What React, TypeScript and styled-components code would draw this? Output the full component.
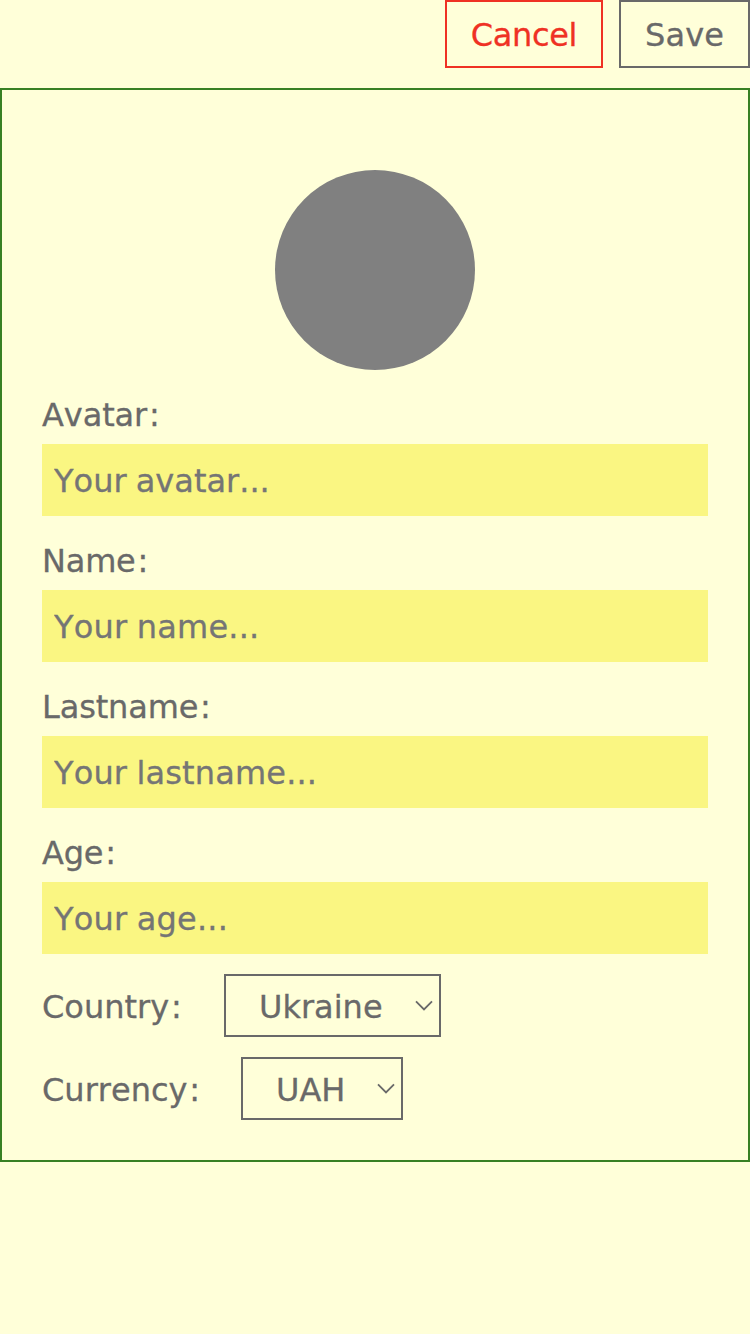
import React from 'react';
import styled, { createGlobalStyle } from 'styled-components';

const Global = createGlobalStyle`
  * { box-sizing: border-box; }
  body {
    margin: 0; background: #ffffd9; color: #696969;
    font: 32px/40px Verdana, "DejaVu Sans", sans-serif; font-kerning: none;
    -webkit-text-stroke: 0.3px currentColor;
  }
`;
const Page = styled.main`min-height: 1334px; background: #ffffd9;`;
const Toolbar = styled.div`display: flex; justify-content: flex-end; gap: 16px; margin-bottom: 20px;`;
const Button = styled.button<{ $width: number; $color: string; $tracking: number }>`
  width: ${p => p.$width}px; height: 68px; padding: 1px 0 0; background: transparent;
  border: 2px solid ${p => p.$color}; color: ${p => p.$color}; font: inherit; font-kerning: none;
  letter-spacing: ${p => p.$tracking}px; white-space: nowrap;
`;
const Form = styled.form`height: 1074px; border: 2px solid #388024; padding: 80px 40px 40px; display: flex; flex-direction: column;`;
const Avatar = styled.div`width: 200px; height: 200px; border-radius: 50%; background: #808080; align-self: center; margin-bottom: 20px; flex: none;`;
const Field = styled.label`display: flex; flex-direction: column; height: 126px; margin-bottom: 20px; flex: none;`;
const Label = styled.span<{ $tracking: number }>`display: block; height: 54px; padding-top: 5px; letter-spacing: ${p => p.$tracking}px; white-space: nowrap;`;
const Colon = styled.span`margin-left: 1.9px;`;
const Input = styled.input<{ $tracking: number }>`
  height: 72px; width: 100%; padding: 3px 12px 1px; border: 0; border-radius: 0; outline: 0;
  background: #faf682; color: #757575; font: inherit; font-kerning: none;
  letter-spacing: ${p => p.$tracking}px; word-spacing: -1px;
  &::placeholder { color: #757575; opacity: 1; }
`;
const SelectRow = styled.div`display: flex; height: 63px; margin-bottom: 20px; align-items: center; flex: none;`;
const SelectLabel = styled.span<{ $width: number }>`width: ${p => p.$width}px; padding-top: 2px; white-space: nowrap;`;
const SelectBox = styled.button<{ $width: number }>`
  width: ${p => p.$width}px; height: 63px; display: flex; align-items: center; justify-content: space-between; padding: 0 6px 0 33px;
  border: 2px solid #696969; background: transparent; color: #696969; font: inherit; font-kerning: none;
`;
const Value = styled.span`padding-top: 2px;`;
const Chevron = () => <svg width="18" height="12" viewBox="0 0 18 12" fill="none" stroke="currentColor" strokeWidth="1.8"><path d="M1 1.4L9 9.4L17 1.4" /></svg>;
const fields = [
  { label: 'Avatar', placeholder: 'Your avatar...', labelTracking: -0.1, tracking: 0 },
  { label: 'Name', placeholder: 'Your name...', labelTracking: -0.2, tracking: 0.2 },
  { label: 'Lastname', placeholder: 'Your lastname...', labelTracking: -0.15, tracking: 0.15 },
  { label: 'Age', placeholder: 'Your age...', labelTracking: -0.2, tracking: 0.2 },
];
export default function App() {
  return <><Global /><Page>
    <Toolbar>
      <Button $width={158} $color="#ef3124" $tracking={-0.35}>Cancel</Button>
      <Button $width={131} $color="#696969" $tracking={0.1}>Save</Button>
    </Toolbar>
    <Form onSubmit={e => e.preventDefault()}>
      <Avatar />
      {fields.map(f => <Field key={f.label}>
        <Label $tracking={f.labelTracking}>{f.label}<Colon>:</Colon></Label>
        <Input placeholder={f.placeholder} $tracking={f.tracking} />
      </Field>)}
      <SelectRow><SelectLabel $width={182}>Country<Colon>:</Colon></SelectLabel><SelectBox type="button" $width={217}><Value>Ukraine</Value><Chevron /></SelectBox></SelectRow>
      <SelectRow><SelectLabel $width={199}>Currency<Colon>:</Colon></SelectLabel><SelectBox type="button" $width={162}><Value>UAH</Value><Chevron /></SelectBox></SelectRow>
    </Form>
  </Page></>;
}
